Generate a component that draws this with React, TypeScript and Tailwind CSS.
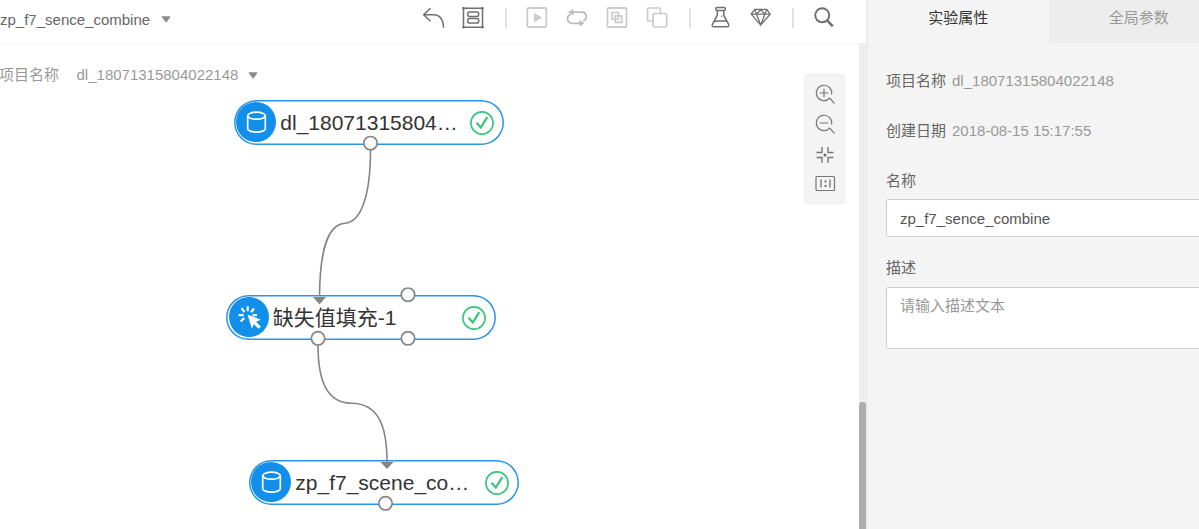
import type { ReactNode } from "react";

function Tool({ className, children }: { className: string; children: ReactNode }) {
  return (
    <button className={`h-6 w-6 shrink-0 ${className}`}>
      <svg viewBox="0 0 24 24" className="block h-6 w-6" fill="none" stroke="currentColor" strokeWidth="1.5">
        {children}
      </svg>
    </button>
  );
}

function Divider({ className }: { className: string }) {
  return <span className={`h-5 w-0.5 shrink-0 bg-[#e1e1e1] ${className}`} />;
}

function Toolbar() {
  return (
    <div className="flex h-9 items-center text-[#707070]">
      <Tool className="">
        <path d="M8.500 2.300 1.700 8.800l6.800 6.400M2 8.800h9.500C18 9 21.300 13.500 21.500 21.800" />
      </Tool>
      <Tool className="ml-[15px]">
        <path d="M2.500 2.300h19v19h-19z" />
        <path d="M1.200 2.300h2.600M2.500 1v2.600M20.200 2.300h2.600M21.500 1v2.600M1.200 21.300h2.600M2.500 20v2.600M20.200 21.300h2.600M21.500 20v2.600" />
        <rect x="6.700" y="6" width="11" height="4.400" rx="1.800" />
        <rect x="6.700" y="12.600" width="11" height="4.400" rx="1.800" />
      </Tool>
      <Divider className="ml-5" />
      <Tool className="ml-[18px] text-[#ccc]">
        <rect x="2.300" y="2" width="19" height="19" rx="1.500" strokeWidth="1.800" />
        <path d="M9 6.700v9.800l8-4.900z" fill="currentColor" stroke="none" />
      </Tool>
      <Tool className="ml-4 text-[#bbb]">
        <path d="M6 6.200h10.500c3 0 4.700 2 4.700 4.600s-1.300 3.600-3 4.200M6 8.200c-2 .5-3.500 2-3.500 4 0 3 2 5.100 5 5.100h9" strokeWidth="1.700" />
        <path d="M3.300 6.200 8.300 3v6.400zM19.500 17.300l-5-3.200v6.400z" fill="currentColor" stroke="none" />
      </Tool>
      <Tool className="ml-4 text-[#ccc]">
        <rect x="2.500" y="2" width="19" height="19" rx="1" strokeWidth="1.800" />
        <path d="M7 6.500h6.500v6.500H7zM10.300 9.800h6.500v6.500h-6.500z" strokeWidth="1.700" />
      </Tool>
      <Tool className="ml-4 text-[#ccc]">
        <path d="M7.500 15H3.800A1.300 1.300 0 0 1 2.500 13.700V3.300A1.300 1.300 0 0 1 3.800 2h10.400a1.300 1.300 0 0 1 1.300 1.300v4" strokeWidth="1.700" />
        <rect x="8" y="7.500" width="13.700" height="13.500" rx="1.300" strokeWidth="1.700" />
      </Tool>
      <Divider className="ml-5" />
      <Tool className="ml-[18px]">
        <rect x="6.800" y="1.600" width="9.600" height="2.800" rx="1.200" />
        <path d="M8.300 4.500v4.700L3.500 18.200c-.8 1.700 0 2.600 1.500 2.600h13c1.500 0 2.300-.9 1.500-2.600L14.700 9.200V4.500M5 15.500c4-1.800 8 .8 13-1" />
        <path d="M12 10.200h1.500M14.500 7.200h1" strokeWidth="1" />
      </Tool>
      <Tool className="ml-4">
        <path d="M5.800 3.400h12l3.400 4.700-9.500 11L2.200 8.100zM2.200 8.100h19M5.800 3.400 7.500 8.100l4.200 11 4.200-11 1.900-4.700M7.500 8.100l4.200-4.600 4.200 4.600" strokeWidth="1.300" />
      </Tool>
      <Divider className="ml-[19px]" />
      <Tool className="ml-[18px]">
        <circle cx="10.200" cy="9.300" r="7" strokeWidth="2" />
        <path d="m15.300 14.600 5.500 5.800" strokeWidth="2.500" />
      </Tool>
    </div>
  );
}

function Caret({ className }: { className: string }) {
  return (
    <svg viewBox="0 0 10 7" className={`h-[7px] w-2.5 text-[#8c8c8c] ${className}`} fill="currentColor">
      <path d="M1 .300h8q.6.300.2.900L5.700 6.100q-.6.600-1.200 0L.9 1.200Q.5.600 1 .300z" />
    </svg>
  );
}

function DatabaseIcon() {
  return (
    <svg viewBox="0 0 40 40" className="h-10 w-10" fill="none" stroke="#fff" strokeWidth="1.700">
      <ellipse cx="20.500" cy="13.700" rx="8.800" ry="3.500" />
      <path d="M11.700 13.700v13c0 1.900 4 3.500 8.800 3.500s8.800-1.600 8.800-3.500v-13" />
    </svg>
  );
}

function ClickIcon() {
  return (
    <svg viewBox="0 0 40 40" className="h-10 w-10">
      <path
        d="M18.700 9.200v5M12.600 11.200l2.800 4M9.600 18.200h5M11.700 24.500l3.600-3.500M25 11.500l-3 3.700M23.500 18.200h4.500"
        stroke="#fff"
        strokeWidth="2.200"
        fill="none"
      />
      <path d="M18.500 17.500 31.800 22.700l-4.700 2.100 4.700 4.700-2.300 2.300-4.600-4.700-2 4.600z" fill="#fff" />
    </svg>
  );
}

function Node({ place, label, icon }: { place: string; label: string; icon: ReactNode }) {
  return (
    <div className={`absolute flex h-[45px] w-[270px] items-center rounded-full bg-white shadow-[inset_0_0_0_1.5px_#2a93ea] ${place}`}>
      <span className="-mt-px ml-[2.300px] h-10 w-10 shrink-0 rounded-full bg-[#128eeb]">{icon}</span>
      <span className="ml-[4px] w-[184px] shrink-0 whitespace-nowrap text-[21px] leading-[30px] text-[#333]">{label}</span>
      <svg viewBox="0 0 26 26" className="ml-[4.700px] mt-px h-[26px] w-[26px] shrink-0" fill="none" stroke="#35c878">
        <circle cx="13" cy="13" r="11.100" strokeWidth="1.600" />
        <path d="m7.500 12.700 4.300 4.800 6.500-10.300" strokeWidth="2.200" />
      </svg>
    </div>
  );
}

function Links() {
  return (
    <svg viewBox="0 0 859 486" className="absolute left-0 top-0 h-[486px] w-[859px]" fill="none" stroke="#858585" strokeWidth="1.600">
      <path d="M370.500 107C370.500 150 362 179 345 180.200C328 181.500 320 205 319.500 253" />
      <path d="M318 302C318 340 328 360 352 360.300C377 361 387 380 387 419" />
      <path d="M313 254h13l-6.500 7.500zM380.500 419h13l-6.500 7z" fill="#858585" stroke="none" />
      <g fill="#fff" strokeWidth="1.700">
        <circle cx="370.500" cy="100.200" r="6.700" />
        <circle cx="408" cy="251.700" r="6.700" />
        <circle cx="318" cy="295.300" r="6.700" />
        <circle cx="408" cy="295.300" r="6.700" />
        <circle cx="385.500" cy="460.300" r="6.700" />
      </g>
    </svg>
  );
}

function ZoomPanel() {
  return (
    <div className="absolute left-[804px] top-[31px] flex h-[130px] w-[41px] flex-col items-center rounded-[3px] border border-[#efefef] bg-[#f4f4f4] pt-[3px] text-[#777] shadow-[0_0_6px_rgba(0,0,0,0.02)]">
      <svg viewBox="0 0 30 120" className="h-[120px] w-[30px]" fill="none" stroke="currentColor" strokeWidth="1.200">
        <path d="M19.800 20.100A7.700 7.700 0 1 1 21.600 16.500M14 10.700v8.600M9.700 15h8.600M18.200 20.300h1.800l4.500 5.400" />
        <path d="M19.800 50.100A7.700 7.700 0 1 1 21.600 46.500M9.700 45h8.600M18.200 50.300h1.800l4.500 5.400" />
        <path d="M12 69v5.500H6.500M18 69v5.500h5.500M12 85v-5.500H6.500M18 85v-5.500h5.500" strokeWidth="1.400" />
        <circle cx="15" cy="77" r="1.500" fill="#666" stroke="none" />
        <rect x="6" y="98.500" width="18.500" height="14" rx="1" />
        <path d="M11 101.500v8M20 101.500v8" strokeWidth="1.400" />
        <path d="M15.500 102.500v2M15.500 107v2" strokeWidth="2" />
      </svg>
    </div>
  );
}

export default function App() {
  return (
    <div className="flex h-[529px] w-[1199px] overflow-hidden bg-white font-['Liberation_Sans','Noto_Sans_CJK_SC',sans-serif] text-[15px]">
      <main className="flex w-[868px] shrink-0 flex-col bg-[#ededed]">
        <header className="flex h-[43px] w-[866px] shrink-0 bg-white">
          <div className="flex h-10 w-[422px] items-center text-[#666]">
            <span className="leading-5">zp_f7_sence_combine</span>
            <Caret className="-mt-[2px] ml-[10.500px]" />
          </div>
          <Toolbar />
        </header>
        <div className="flex h-[486px]">
          <section className="relative w-[859px] shrink-0 overflow-hidden bg-white">
            <div className="h-1 bg-linear-to-b from-[#f8f8f8] to-white" />
            <div className="mt-[18px] flex h-5 items-center text-[#999]">
              <span className="-ml-px leading-5">项目名称</span>
              <span className="ml-[17.500px] leading-5">dl_18071315804022148</span>
              <Caret className="ml-2.5" />
            </div>
            <Node place="left-[234px] top-[57px]" label="dl_18071315804…" icon={<DatabaseIcon />} />
            <Node place="left-[226.400px] top-[252px]" label="缺失值填充-1" icon={<ClickIcon />} />
            <Node place="left-[249px] top-[417px]" label="zp_f7_scene_co…" icon={<DatabaseIcon />} />
            <Links />
            <ZoomPanel />
          </section>
          <div className="flex flex-1 flex-col justify-end">
            <div className="h-[127px] w-[7px] rounded-t-[3px] bg-[#adadad]" />
          </div>
        </div>
      </main>
      <aside className="flex flex-1 flex-col overflow-hidden bg-[#f4f4f4] text-[#666]">
        <div className="flex h-[43px] w-[361px] shrink-0 leading-5">
          <div className="w-[180.500px] pt-2 text-center text-[#333]">实验属性</div>
          <div className="w-[180.500px] bg-[#ededed] pt-2 text-center text-[#999]">全局参数</div>
        </div>
        <div className="flex w-[362px] flex-col pl-[18px] leading-5">
          <div className="mt-7 flex gap-[6px]">
            <span>项目名称</span>
            <span className="text-[#999]">dl_18071315804022148</span>
          </div>
          <div className="mt-[30px] flex gap-[6px]">
            <span>创建日期</span>
            <span className="text-[#999]">2018-08-15 15:17:55</span>
          </div>
          <label className="mt-[30px]">名称</label>
          <input
            defaultValue="zp_f7_sence_combine"
            className="mt-2 h-[38px] rounded-[2px] border border-[#ccc] bg-white px-[13px] text-[#555] outline-none"
          />
          <label className="mt-[21px]">描述</label>
          <textarea
            placeholder="请输入描述文本"
            className="mt-[9px] h-[62px] resize-none rounded-[2px] border border-[#ccc] bg-white px-[13px] py-2 leading-5 outline-none placeholder:text-[#999]"
          />
        </div>
      </aside>
    </div>
  );
}
